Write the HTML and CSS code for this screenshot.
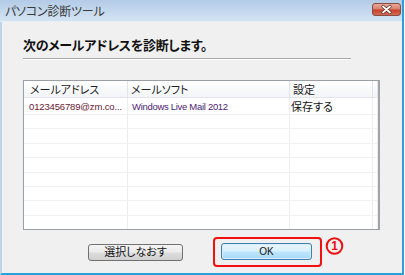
FILE: index.html
```html
<!DOCTYPE html>
<html lang="ja">
<head>
    <meta charset="UTF-8">
    <meta name="viewport" content="width=device-width, initial-scale=1.0">
    <title>パソコン診断ツール</title>
    <link rel="stylesheet" href="styles.css">
</head>
<body>
    <div class="window">
        <div class="titlebar">
            <span class="title">パソコン診断ツール</span>
            <span class="close-btn">
                <svg width="27" height="11" viewBox="0 0 27 11">
                    <path d="M10 2.5 L17 8.5 M17 2.5 L10 8.5" stroke="#5a2a24" stroke-width="3.2" stroke-linecap="round"/>
                    <path d="M10 2.5 L17 8.5 M17 2.5 L10 8.5" stroke="#ffffff" stroke-width="1.8" stroke-linecap="round"/>
                </svg>
            </span>
        </div>

        <div class="content">
            <h1 class="heading">次のメールアドレスを診断します。</h1>

            <div class="list">
                <div class="list-row list-head">
                    <div class="cell">メールアドレス</div>
                    <div class="cell">メールソフト</div>
                    <div class="cell">設定</div>
                    <div class="cell"></div>
                </div>
                <div class="list-row first">
                    <div class="cell address">0123456789@zm.co...</div>
                    <div class="cell software">Windows Live Mail 2012</div>
                    <div class="cell setting">保存する</div>
                    <div class="cell"></div>
                </div>
                <div class="list-row"><div class="cell"></div><div class="cell"></div><div class="cell"></div><div class="cell"></div></div>
                <div class="list-row"><div class="cell"></div><div class="cell"></div><div class="cell"></div><div class="cell"></div></div>
                <div class="list-row"><div class="cell"></div><div class="cell"></div><div class="cell"></div><div class="cell"></div></div>
                <div class="list-row"><div class="cell"></div><div class="cell"></div><div class="cell"></div><div class="cell"></div></div>
                <div class="list-row"><div class="cell"></div><div class="cell"></div><div class="cell"></div><div class="cell"></div></div>
                <div class="list-row"><div class="cell"></div><div class="cell"></div><div class="cell"></div><div class="cell"></div></div>
                <div class="list-row"><div class="cell"></div><div class="cell"></div><div class="cell"></div><div class="cell"></div></div>
                <div class="list-row last"><div class="cell"></div><div class="cell"></div><div class="cell"></div><div class="cell"></div></div>
            </div>

            <div class="actions">
                <button type="button" class="btn reselect">選択しなおす</button>
                <div class="highlight">
                    <button type="button" class="btn ok">OK</button>
                    <svg class="step-mark" width="20" height="19" viewBox="0 0 20 19">
                        <circle cx="9.5" cy="9" r="7.8" fill="none" stroke="#ee1111" stroke-width="2"/>
                        <text x="9.5" y="13.4" text-anchor="middle" class="step-num">1</text>
                    </svg>
                </div>
            </div>
        </div>
    </div>
</body>
</html>
```

FILE: styles.css
```css
body {
    margin: 0;
    background-color: #ffffff;
    font-family: "Liberation Sans", "Noto Sans CJK JP", sans-serif;
    font-feature-settings: "palt";
}
.window {
    width: 404px;
    height: 275px;
    box-sizing: border-box;
    display: flex;
    flex-direction: column;
    border-left: 2px solid #bcd5ec;
    border-right: 2px solid #2f9ed8;
    border-bottom: 2px solid #27a3dc;
    background-color: #f0f0f0;
}
.titlebar {
    height: 21px;
    display: flex;
    align-items: center;
    justify-content: space-between;
    padding: 0 1px 0 5px;
    margin-left: -2px;
    background: linear-gradient(to bottom, #b3cbe7, #c7daee 60%, #d3e3f2);
    border-bottom: 1px solid #e6eef7;
}
.title {
    font-size: 12px;
    color: #3a3a3a;
    letter-spacing: -0.2px;
}
.close-btn {
    width: 27px;
    height: 11px;
    display: flex;
    border: 1px solid #8a4b42;
    border-radius: 3px;
    background: linear-gradient(to bottom, #e9a99a, #d8806c 45%, #c7432d 55%, #d36a54);
    margin-top: -2px;
}
.content {
    flex: 1;
    padding: 0 22px 0 21px;
    display: flex;
    flex-direction: column;
}
.heading {
    font-size: 13px;
    font-weight: bold;
    color: #111;
    letter-spacing: -0.3px;
    line-height: 18px;
    margin: 15px 0 0 0;
    padding-bottom: 3px;
    width: 328px;
    border-bottom: 1px solid #a8a8a8;
    box-shadow: 0 1px 0 #ffffff;
}
.list {
    margin-top: 21px;
    height: 150px;
    box-sizing: border-box;
    border: 1px solid #9a9ea6;
    border-right: 2px solid #a0a4aa;
    background-color: #ffffff;
    display: flex;
    flex-direction: column;
}
.list-row {
    display: grid;
    grid-template-columns: 104px 162px 83px 1fr;
    flex: 1;
    border-bottom: 1px solid #f0f0f0;
    font-size: 11px;
    color: #111;
}
.list-row.last {
    border-bottom: none;
}
.list-head {
    flex: 0 0 17px;
    box-sizing: border-box;
    background: linear-gradient(to bottom, #ffffff, #f2f4f7);
    border-bottom: 1px solid #e3e5e8;
    color: #222;
}
.list-row.first {
    flex: 0 0 16px;
    box-sizing: border-box;
}
.cell {
    border-right: 1px solid #ededed;
    padding-left: 3px;
    white-space: nowrap;
    overflow: hidden;
    display: flex;
    align-items: center;
}
.list-head .cell {
    border-right-color: #e2e4e7;
}
.cell:first-child {
    padding-left: 6px;
}
.cell.address {
    padding-left: 5px;
    color: #6a1832;
    font-size: 9.5px;
    letter-spacing: -0.15px;
}
.cell.software {
    padding-left: 4px;
    color: #4e2472;
    font-size: 9.5px;
    letter-spacing: -0.3px;
}
.cell.setting {
    padding-left: 1px;
}
.actions {
    display: flex;
    align-items: center;
    margin-top: 7px;
    padding-left: 65px;
    gap: 30px;
}
.btn {
    height: 17px;
    box-sizing: border-box;
    border: 1px solid #707070;
    border-radius: 3px;
    background: linear-gradient(to bottom, #f4f4f4, #ebebeb 48%, #dddddd 52%, #d0d0d0);
    font-family: "Liberation Sans", "Noto Sans CJK JP", sans-serif;
    font-feature-settings: "palt";
    font-size: 11px;
    color: #111;
    padding: 0;
    line-height: 14px;
}
.reselect {
    width: 95px;
}
.highlight {
    position: relative;
    border: 2px solid #f01010;
    border-radius: 4px;
    padding: 4px 8px 5px 6px;
    display: flex;
}
.ok {
    width: 91px;
    font-size: 10px;
    border-color: #3c7fb1;
    background: linear-gradient(to bottom, #eaf6fd, #d9f0fc 48%, #bee6fd 52%, #a7d9f5);
    box-shadow: inset 0 0 0 1px #dcecf8;
}
.step-mark {
    position: absolute;
    left: calc(100% + 5px);
    top: -2px;
}
.step-num {
    font-family: "Liberation Sans", sans-serif;
    font-size: 12px;
    font-weight: bold;
    fill: #ee1111;
}
```
